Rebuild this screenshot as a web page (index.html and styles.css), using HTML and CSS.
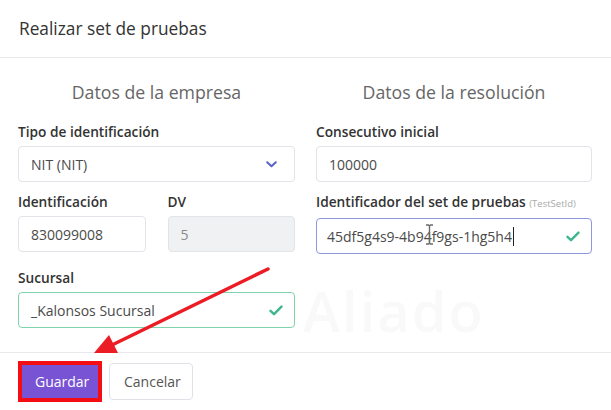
FILE: index.html
```html
<!DOCTYPE html>
<html lang="es">
<head>
    <meta charset="UTF-8">
    <meta name="viewport" content="width=device-width, initial-scale=1.0">
    <title>Realizar set de pruebas</title>
    <link rel="stylesheet" href="styles.css">
</head>
<body>
    <div class="watermark">Aliado</div>

    <div class="modal">
        <div class="modal-header">
            <h5 class="modal-title">Realizar set de pruebas</h5>
        </div>

        <div class="modal-body">
            <!-- Columna empresa -->
            <div class="col">
                <h4 class="section-title">Datos de la empresa</h4>

                <div class="group">
                    <label class="label">Tipo de identificación</label>
                    <div class="field">
                        <span>NIT (NIT)</span>
                        <svg class="chevron" width="11" height="7" viewBox="0 0 11 7">
                            <path d="M1.2 1.2 L5.5 5.3 L9.8 1.2" fill="none" stroke="#5863c4" stroke-width="2" stroke-linecap="round" stroke-linejoin="round"/>
                        </svg>
                    </div>
                </div>

                <div class="group pair">
                    <div>
                        <label class="label">Identificación</label>
                        <div class="field">830099008</div>
                    </div>
                    <div>
                        <label class="label">DV</label>
                        <div class="field disabled">5</div>
                    </div>
                </div>

                <div class="group last">
                    <label class="label">Sucursal</label>
                    <div class="field valid">
                        <span>_Kalonsos Sucursal</span>
                        <svg class="check" width="14" height="11" viewBox="0 0 14 11">
                            <path d="M1.5 5.8 L5 9.2 L12.5 1.6" fill="none" stroke="#3fb68b" stroke-width="2.4" stroke-linecap="round" stroke-linejoin="round"/>
                        </svg>
                    </div>
                </div>
            </div>

            <!-- Columna resolución -->
            <div class="col">
                <h4 class="section-title">Datos de la resolución</h4>

                <div class="group">
                    <label class="label">Consecutivo inicial</label>
                    <div class="field">100000</div>
                </div>

                <div class="group">
                    <label class="label">Identificador del set de pruebas <small class="hint">(TestSetId)</small></label>
                    <div class="field focus">
                        <span class="value">45df5g4s9-4b94f9gs-1hg5h4<span class="caret"></span></span>
                        <svg class="check" width="14" height="11" viewBox="0 0 14 11">
                            <path d="M1.5 5.8 L5 9.2 L12.5 1.6" fill="none" stroke="#3fb68b" stroke-width="2.4" stroke-linecap="round" stroke-linejoin="round"/>
                        </svg>
                        <svg class="ibeam" width="9" height="21" viewBox="0 0 9 21">
                            <path d="M1 1 H3.5 L4.5 2 L5.5 1 H8 M4.5 2 V19 M1 20 H3.5 L4.5 19 L5.5 20 H8" fill="none" stroke="#6a6a6a" stroke-width="1.4"/>
                        </svg>
                    </div>
                </div>
            </div>
        </div>

        <div class="modal-footer">
            <button class="btn btn-primary marked">Guardar</button>
            <button class="btn btn-light">Cancelar</button>
        </div>
    </div>

    <!-- flecha roja -->
    <svg class="arrow" width="611" height="410" viewBox="0 0 611 410">
        <line x1="268" y1="269" x2="112" y2="345" stroke="#ec1c24" stroke-width="3.5" stroke-linecap="round"/>
        <polygon points="94,353 109,335 118,353" fill="#ec1c24"/>
    </svg>
</body>
</html>
```

FILE: styles.css
```css
body {
    margin: 0;
    background: #fff;
    font-family: "Open Sans", "Noto Sans", Arial, sans-serif;
    color: #333;
    position: relative;
    width: 611px;
    height: 410px;
    overflow: hidden;
}

.watermark {
    position: absolute;
    left: 303px;
    top: 272px;
    font-size: 56px;
    font-weight: 600;
    color: #f9f9f9;
    letter-spacing: 2px;
}

.modal {
    position: relative;
}

.modal-header {
    height: 57px;
    border-bottom: 1px solid #e7e9ec;
    display: flex;
    align-items: center;
    padding: 0 19px;
}
.modal-title {
    margin: 0;
    font-size: 17.3px;
    font-weight: 400;
    color: #333;
}

.modal-body {
    display: grid;
    grid-template-columns: 277px 276px;
    column-gap: 21px;
    padding: 22px 19px 24px 18px;
}

.section-title {
    margin: 0 0 18px;
    text-align: center;
    font-size: 17.7px;
    line-height: 24px;
    font-weight: 400;
    color: #666;
}

.group { margin-bottom: 10px; }
.group.pair { display: grid; grid-template-columns: 1fr 1fr; column-gap: 22px; margin-bottom: 16px; }
.group.last { margin-bottom: 0; }

.label {
    display: block;
    font-size: 13.7px;
    line-height: 20px;
    font-weight: 600;
    color: #333;
    margin-bottom: 4px;
}
.hint {
    font-size: 9.5px;
    font-weight: 400;
    color: #a9a9a9;
}

.field {
    position: relative;
    box-sizing: border-box;
    height: 36px;
    border: 1px solid #e1e4e8;
    border-radius: 4px;
    padding: 0 11px 0 12px;
    display: flex;
    align-items: center;
    justify-content: space-between;
    font-size: 14px;
    color: #4a4a4a;
    background: #fff;
}
.field.disabled { background: #f0f1f3; color: #8a8a8a; }
.field.valid { border-color: #7fd3aa; }
.field.focus { border-color: #8e98e0; padding-left: 10px; }

.chevron { margin-right: 6px; }

.value { display: flex; align-items: center; }
.caret {
    display: inline-block;
    width: 1px;
    height: 19px;
    background: #222;
    margin-left: 1px;
}
.ibeam {
    position: absolute;
    left: 108px;
    top: 5px;
}

.modal-footer {
    border-top: 1px solid #e7e9ec;
    padding: 10px 20px;
    display: flex;
    gap: 9px;
}

.btn {
    height: 37px;
    border-radius: 4px;
    font-family: inherit;
    font-size: 14px;
    padding: 0 14px;
    cursor: pointer;
}
.btn-primary {
    background: #7853d4;
    border: 1px solid #7853d4;
    color: #fff;
    width: 80px;
}
.btn-light {
    background: #fff;
    border: 1px solid #dfe2e6;
    color: #555;
    width: 84px;
}
.marked {
    outline: 4px solid #f40d12;
    outline-offset: -2px;
    border-radius: 0;
}

.arrow {
    position: absolute;
    left: 0;
    top: 0;
    pointer-events: none;
}
```
